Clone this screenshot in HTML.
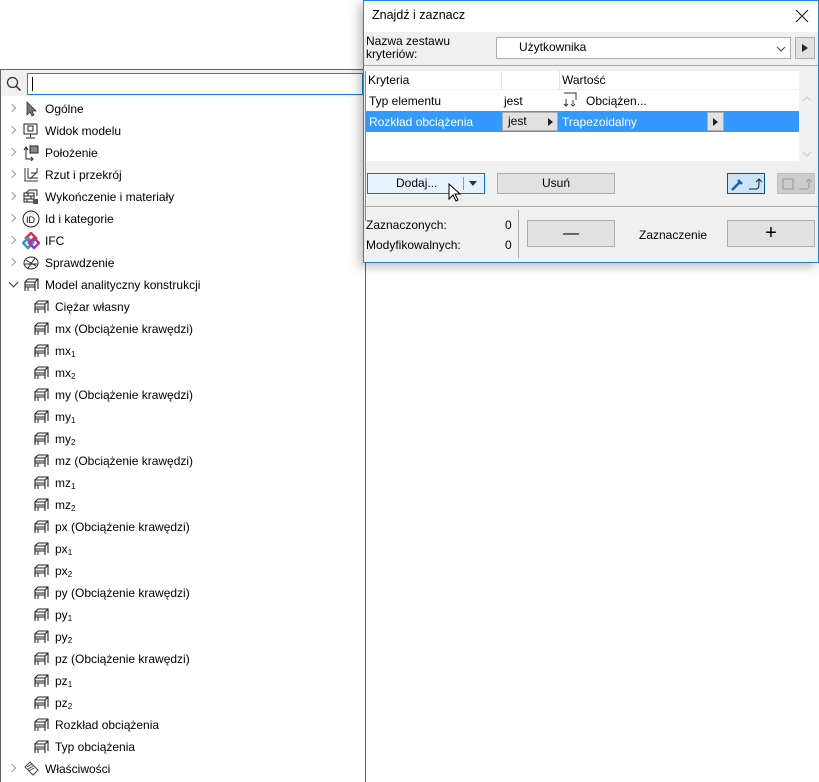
<!DOCTYPE html>
<html><head><meta charset="utf-8"><style>
*{margin:0;padding:0;box-sizing:border-box}
body{width:819px;height:782px;background:#fff;position:relative;overflow:hidden;font-family:"Segoe UI","Liberation Sans",sans-serif;font-size:12px;color:#000}
.abs{position:absolute}
#panel{left:0;top:69px;width:366px;height:713px;border:1px solid #646464;border-bottom:none;background:#fff}
#search{left:0;top:0;width:364px;height:26px;background:#f0f0f0}
#inp{left:26px;top:3px;width:336px;height:22px;border:1px solid #1883d7;background:#fff}
.row{position:absolute;left:0;height:22px;line-height:22px;white-space:nowrap}
.chev{position:absolute;left:8px;top:7px;width:6px;height:6px;border-right:1.3px solid #999;border-top:1.3px solid #999;transform:rotate(45deg)}
.chevd{position:absolute;left:9px;top:5px;width:7px;height:7px;border-right:1.5px solid #333;border-bottom:1.5px solid #333;transform:rotate(45deg)}
.ic{position:absolute;top:3px}
sub{font-size:8px;vertical-align:-2px}
#dlg{left:363px;top:0;width:456px;height:263px;background:#f0f0f0;border:1px solid #1883d7;box-shadow:-4px 4px 10px rgba(0,0,0,.25)}
#title{left:0;top:0;width:454px;height:31px;background:#fff}
.btn{position:absolute;background:#e1e1e1;border:1px solid #adadad;text-align:center;line-height:19px}
</style></head><body>
<svg width="0" height="0" style="position:absolute"><defs>
<g id="fr"><path d="M2 14V5l3-3h10v10M2 5h10v9M12 5l3-3M2 8h10M2 10h10M12 14V8" fill="none" stroke="#222" stroke-width="1.1"/><path d="M5 10v4" stroke="#222"/></g>
</defs></svg>
<div id="panel" class="abs">
 <div id="search" class="abs">
  <svg class="abs" style="left:5px;top:6px" width="16" height="16"><circle cx="6.5" cy="6.5" r="5" fill="none" stroke="#333" stroke-width="1.3"/><path d="M10 10l4.5 4.5" stroke="#333" stroke-width="1.5"/></svg>
  <div id="inp" class="abs"><div class="abs" style="left:4px;top:3px;width:1px;height:14px;background:#000"></div></div>
 </div>
</div>
<div id="tree" class="abs" style="left:1px;top:98px;width:364px">
 <div class="row" style="top:0"><div class="chev"></div><svg class="ic" style="left:22px" width="16" height="16"><path d="M4 1v13l3-3 2 4 2-1-2-4h4z" fill="#777" stroke="#333" stroke-width=".8"/></svg><span style="position:absolute;left:44px">Ogólne</span></div>
 <div class="row" style="top:22px"><div class="chev"></div><svg class="ic" style="left:22px" width="16" height="16"><rect x="1" y="1" width="13" height="10" fill="none" stroke="#222"/><rect x="5" y="3" width="5" height="5" fill="none" stroke="#222"/><path d="M7.5 11v3M3 15h9" stroke="#222"/></svg><span style="position:absolute;left:44px">Widok modelu</span></div>
 <div class="row" style="top:44px"><div class="chev"></div><svg class="ic" style="left:22px" width="16" height="16"><path d="M3 3v11h6M1 5l2-3 2 3M8 12l2 2-2 2" fill="none" stroke="#222"/><rect x="7" y="1" width="8" height="7" fill="#888" stroke="#222"/></svg><span style="position:absolute;left:44px">Położenie</span></div>
 <div class="row" style="top:66px"><div class="chev"></div><svg class="ic" style="left:22px" width="16" height="16"><path d="M2 1v13h13M5 1v10h10M7 12l7-7M8 6l6 0M14 1v5" fill="none" stroke="#333"/></svg><span style="position:absolute;left:44px">Rzut i przekrój</span></div>
 <div class="row" style="top:88px"><div class="chev"></div><svg class="ic" style="left:22px" width="17" height="16"><path d="M1 4h10v9H1zM1 7h10M1 10h10M5 4v3M8 7v3M4 10v3M3 4l3-3h8v6" fill="none" stroke="#222"/><rect x="10" y="10" width="5" height="5" fill="#555"/></svg><span style="position:absolute;left:44px">Wykończenie i materiały</span></div>
 <div class="row" style="top:110px"><div class="chev"></div><svg class="ic" style="left:21px;top:2px" width="18" height="18"><circle cx="9" cy="9" r="8" fill="none" stroke="#222"/><text x="4" y="13" font-size="9" font-family="Liberation Sans">ID</text></svg><span style="position:absolute;left:44px">Id i kategorie</span></div>
 <div class="row" style="top:132px"><div class="chev"></div><svg class="ic" style="left:21px;top:2px" width="18" height="18"><path d="M9 1l5 5-5 5-5-5z" fill="none" stroke="#d33" stroke-width="2.5"/><path d="M6 6l5 5-5 5-5-5z" fill="none" stroke="#39c" stroke-width="2.5"/><path d="M12 6l5 5-5 5-5-5z" fill="none" stroke="#a3a" stroke-width="2.5"/></svg><span style="position:absolute;left:44px">IFC</span></div>
 <div class="row" style="top:154px"><div class="chev"></div><svg class="ic" style="left:22px" width="16" height="16"><ellipse cx="8" cy="8" rx="7" ry="6" fill="none" stroke="#222"/><path d="M3 5l10 6M5 13l7-10M2 9h12" stroke="#222" fill="none"/></svg><span style="position:absolute;left:44px">Sprawdzenie</span></div>
 <div class="row" style="top:176px"><div class="chevd"></div><svg class="ic" style="left:22px" width="16" height="16"><use href="#fr"/></svg><span style="position:absolute;left:44px">Model analityczny konstrukcji</span></div>
 <div class="row" style="top:198px"><svg class="ic" style="left:32px" width="16" height="16"><use href="#fr"/></svg><span style="position:absolute;left:54px">Ciężar własny</span></div>
 <div class="row" style="top:220px"><svg class="ic" style="left:32px" width="16" height="16"><use href="#fr"/></svg><span style="position:absolute;left:54px">mx (Obciążenie krawędzi)</span></div>
 <div class="row" style="top:242px"><svg class="ic" style="left:32px" width="16" height="16"><use href="#fr"/></svg><span style="position:absolute;left:54px">mx<sub>1</sub></span></div>
 <div class="row" style="top:264px"><svg class="ic" style="left:32px" width="16" height="16"><use href="#fr"/></svg><span style="position:absolute;left:54px">mx<sub>2</sub></span></div>
 <div class="row" style="top:286px"><svg class="ic" style="left:32px" width="16" height="16"><use href="#fr"/></svg><span style="position:absolute;left:54px">my (Obciążenie krawędzi)</span></div>
 <div class="row" style="top:308px"><svg class="ic" style="left:32px" width="16" height="16"><use href="#fr"/></svg><span style="position:absolute;left:54px">my<sub>1</sub></span></div>
 <div class="row" style="top:330px"><svg class="ic" style="left:32px" width="16" height="16"><use href="#fr"/></svg><span style="position:absolute;left:54px">my<sub>2</sub></span></div>
 <div class="row" style="top:352px"><svg class="ic" style="left:32px" width="16" height="16"><use href="#fr"/></svg><span style="position:absolute;left:54px">mz (Obciążenie krawędzi)</span></div>
 <div class="row" style="top:374px"><svg class="ic" style="left:32px" width="16" height="16"><use href="#fr"/></svg><span style="position:absolute;left:54px">mz<sub>1</sub></span></div>
 <div class="row" style="top:396px"><svg class="ic" style="left:32px" width="16" height="16"><use href="#fr"/></svg><span style="position:absolute;left:54px">mz<sub>2</sub></span></div>
 <div class="row" style="top:418px"><svg class="ic" style="left:32px" width="16" height="16"><use href="#fr"/></svg><span style="position:absolute;left:54px">px (Obciążenie krawędzi)</span></div>
 <div class="row" style="top:440px"><svg class="ic" style="left:32px" width="16" height="16"><use href="#fr"/></svg><span style="position:absolute;left:54px">px<sub>1</sub></span></div>
 <div class="row" style="top:462px"><svg class="ic" style="left:32px" width="16" height="16"><use href="#fr"/></svg><span style="position:absolute;left:54px">px<sub>2</sub></span></div>
 <div class="row" style="top:484px"><svg class="ic" style="left:32px" width="16" height="16"><use href="#fr"/></svg><span style="position:absolute;left:54px">py (Obciążenie krawędzi)</span></div>
 <div class="row" style="top:506px"><svg class="ic" style="left:32px" width="16" height="16"><use href="#fr"/></svg><span style="position:absolute;left:54px">py<sub>1</sub></span></div>
 <div class="row" style="top:528px"><svg class="ic" style="left:32px" width="16" height="16"><use href="#fr"/></svg><span style="position:absolute;left:54px">py<sub>2</sub></span></div>
 <div class="row" style="top:550px"><svg class="ic" style="left:32px" width="16" height="16"><use href="#fr"/></svg><span style="position:absolute;left:54px">pz (Obciążenie krawędzi)</span></div>
 <div class="row" style="top:572px"><svg class="ic" style="left:32px" width="16" height="16"><use href="#fr"/></svg><span style="position:absolute;left:54px">pz<sub>1</sub></span></div>
 <div class="row" style="top:594px"><svg class="ic" style="left:32px" width="16" height="16"><use href="#fr"/></svg><span style="position:absolute;left:54px">pz<sub>2</sub></span></div>
 <div class="row" style="top:616px"><svg class="ic" style="left:32px" width="16" height="16"><use href="#fr"/></svg><span style="position:absolute;left:54px">Rozkład obciążenia</span></div>
 <div class="row" style="top:638px"><svg class="ic" style="left:32px" width="16" height="16"><use href="#fr"/></svg><span style="position:absolute;left:54px">Typ obciążenia</span></div>
 <div class="row" style="top:660px"><div class="chev"></div><svg class="ic" style="left:22px" width="16" height="16"><path d="M2 6l5-5 8 8-5 5zM4 6l5-3M5 8l5-3M6 10l5-3" fill="none" stroke="#444"/></svg><span style="position:absolute;left:44px">Właściwości</span></div>
</div>

<div id="dlg" class="abs">
 <div id="title" class="abs"><span class="abs" style="left:8px;top:7px;font-size:12.5px">Znajdź i zaznacz</span>
  <svg class="abs" style="left:431px;top:8px" width="14" height="14"><path d="M1 1l12 12M13 1L1 13" stroke="#222" stroke-width="1.2"/></svg></div>
 <div class="abs" style="left:2px;top:34px;line-height:13px">Nazwa zestawu<br>kryteriów:</div>
 <div class="abs" style="left:132px;top:36px;width:295px;height:22px;background:#fff;border:1px solid #adadad"><span class="abs" style="left:22px;top:2px">Użytkownika</span>
  <svg class="abs" style="left:279px;top:8px" width="10" height="6"><path d="M1 1l4 4 4-4" fill="none" stroke="#444"/></svg></div>
 <div class="btn" style="left:431px;top:36px;width:20px;height:22px"><svg width="6" height="8" style="margin-top:6px"><path d="M0 0l6 4-6 4z" fill="#222"/></svg></div>
 <div class="abs" style="left:0;top:64px;width:454px;height:1px;background:#aaa"></div>
 <div class="abs" style="left:1px;top:70px;width:1px;height:150px;background:#888"></div>
 <div class="abs" style="left:2px;top:70px;width:433px;height:90px;background:#fff"></div>
 <div class="abs" style="left:2px;top:70px;width:433px;height:19px;border-bottom:1px solid #f0f0f0"></div>
 <div class="abs" style="left:137px;top:70px;width:1px;height:19px;background:#e5e5e5"></div>
 <div class="abs" style="left:195px;top:70px;width:1px;height:19px;background:#e5e5e5"></div>
 <span class="abs" style="left:4px;top:72px">Kryteria</span><span class="abs" style="left:198px;top:72px">Wartość</span>
 <span class="abs" style="left:5px;top:93px">Typ elementu</span><span class="abs" style="left:140px;top:93px">jest</span>
 <svg class="abs" style="left:199px;top:91px" width="16" height="16"><path d="M1 1h12v7M3 7v6M10 8v4M1 12l2 2 2-2M8 12l2 2 2-2" fill="none" stroke="#333"/></svg>
 <span class="abs" style="left:222px;top:93px">Obciążen...</span>
 <div class="abs" style="left:2px;top:110px;width:433px;height:21px;background:#3399ff"></div>
 <span class="abs" style="left:5px;top:114px;color:#fff">Rozkład obciążenia</span>
 <div class="abs" style="left:138px;top:111px;width:56px;height:19px;background:#e1e1e1;border:1px solid #adadad"><span class="abs" style="left:5px;top:1px">jest</span><svg class="abs" style="left:45px;top:5px" width="5" height="8"><path d="M0 0l5 4-5 4z" fill="#222"/></svg></div>
 <span class="abs" style="left:198px;top:114px;color:#fff">Trapezoidalny</span>
 <div class="abs" style="left:343px;top:111px;width:17px;height:19px;background:#e1e1e1;border:1px solid #adadad"><svg class="abs" style="left:5px;top:5px" width="5" height="8"><path d="M0 0l5 4-5 4z" fill="#222"/></svg></div>
 <svg class="abs" style="left:438px;top:95px" width="10" height="6"><path d="M1 5l4-4 4 4" fill="none" stroke="#ccc"/></svg>
 <svg class="abs" style="left:438px;top:150px" width="10" height="6"><path d="M1 1l4 4 4-4" fill="none" stroke="#ccc"/></svg>
 <div class="abs" style="left:3px;top:172px;width:118px;height:21px;background:#e5f1fb;border:1px solid #0078d7"><span class="abs" style="left:28px;top:2px">Dodaj...</span><div class="abs" style="left:95px;top:3px;width:1px;height:13px;background:#999"></div><svg class="abs" style="left:101px;top:7px" width="8" height="5"><path d="M0 0h8l-4 5z" fill="#333"/></svg></div>
 <svg class="abs" style="left:84px;top:182px" width="14" height="20"><path d="M1 1v15l4-4 3 6 2-1-3-6h5z" fill="#fff" stroke="#000"/></svg>
 <div class="btn" style="left:133px;top:172px;width:118px;height:21px"><span>Usuń</span></div>
 <div class="abs" style="left:363px;top:172px;width:38px;height:21px;background:#cce4f7;border:1px solid #005499"><svg class="abs" style="left:2px;top:2px" width="34" height="16"><path d="M2 14l8-8M8 4l4 4" stroke="#1c5fa6" stroke-width="2.5"/><path d="M19 13h7c3 0 3-2 3-9M26 6l3-3 3 3" fill="none" stroke="#222"/></svg></div>
 <div class="abs" style="left:413px;top:172px;width:38px;height:21px;background:#ccc;border:1px solid #bfbfbf"><svg class="abs" style="left:2px;top:2px" width="34" height="16"><rect x="3" y="3" width="10" height="10" fill="none" stroke="#999"/><path d="M19 13h7c3 0 3-2 3-9M26 6l3-3 3 3" fill="none" stroke="#999"/></svg></div>
 <div class="abs" style="left:0;top:205px;width:454px;height:1px;background:#aaa"></div>
 <div class="abs" style="left:154px;top:209px;width:1px;height:48px;background:#aaa"></div>
 <span class="abs" style="left:2px;top:217px">Zaznaczonych:</span><span class="abs" style="left:141px;top:217px">0</span>
 <span class="abs" style="left:2px;top:237px">Modyfikowalnych:</span><span class="abs" style="left:141px;top:237px">0</span>
 <div class="btn" style="left:163px;top:219px;width:88px;height:27px;line-height:25px;font-size:16px">—</div>
 <span class="abs" style="left:275px;top:227px">Zaznaczenie</span>
 <div class="btn" style="left:363px;top:219px;width:88px;height:27px;line-height:24px;font-size:20px">+</div>
</div>
</body></html>
